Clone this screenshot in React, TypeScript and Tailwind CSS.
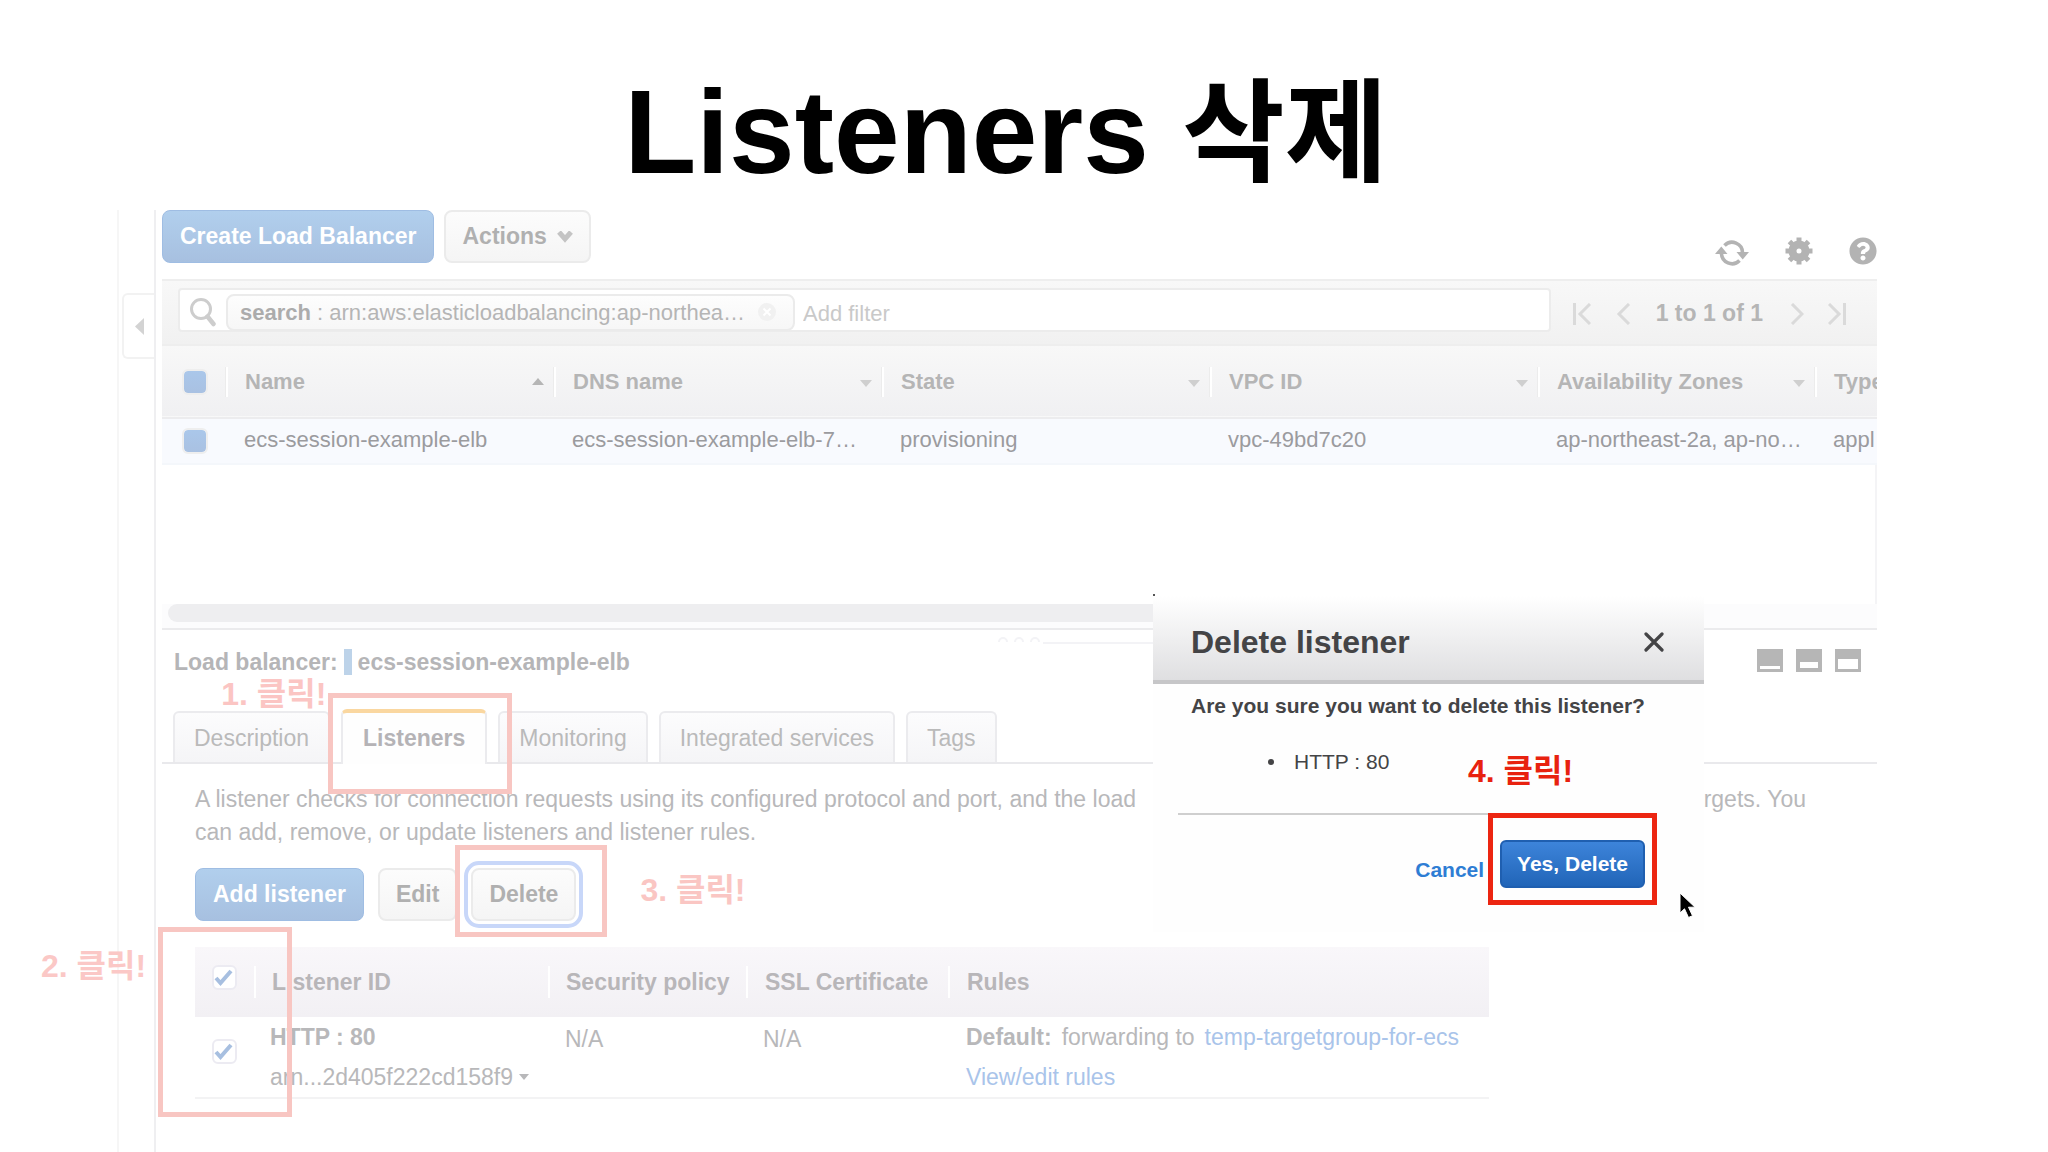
import React from 'react';
import { FaQuestionCircle } from 'react-icons/fa';

interface Column {
  label: string;
  value: string;
  width: string;
  sort?: 'asc' | 'none';
}

const COLUMNS: Column[] = [
  { label: 'Name', value: 'ecs-session-example-elb', width: 'w-[328px]', sort: 'asc' },
  { label: 'DNS name', value: 'ecs-session-example-elb-7…', width: 'w-[328px]', sort: 'none' },
  { label: 'State', value: 'provisioning', width: 'w-[328px]', sort: 'none' },
  { label: 'VPC ID', value: 'vpc-49bd7c20', width: 'w-[328px]', sort: 'none' },
  { label: 'Availability Zones', value: 'ap-northeast-2a, ap-no…', width: 'w-[277px]', sort: 'none' },
  { label: 'Type', value: 'appl', width: 'w-auto' },
];

const grayButton =
  'rounded-lg border-2 border-[#ebebeb] bg-gradient-to-b from-[#fcfcfc] to-[#f5f5f5] font-bold text-[#b0b0b0]';
const blueButton =
  'rounded-lg border border-[#9fbde3] bg-gradient-to-b from-[#b1cfed] to-[#a7c0e0] font-bold text-white';

/* Red frame drawn around the control to click */
const Frame = ({ className }: { className: string }) => (
  <span className={`pointer-events-none absolute z-20 border-[5px] ${className}`} />
);

/* Step caption next to a frame */
const Step = ({ className, children }: { className: string; children: React.ReactNode }) => (
  <span className={`pointer-events-none absolute z-20 text-[32px] leading-10 font-bold whitespace-nowrap ${className}`}>
    {children}
  </span>
);

const SortArrow = ({ up }: { up?: boolean }) => (
  <svg className={up ? 'h-[7px] w-3 text-[#b5b5b5]' : 'mt-1 h-[7px] w-3 text-[#cfcfcf]'} viewBox="0 0 12 7" fill="currentColor">
    <path d={up ? 'M0 7 6 0l6 7z' : 'M0 0h12L6 7z'} />
  </svg>
);

const RefreshIcon = () => (
  <svg className="h-7 w-[34px]" viewBox="0 0 34 28" fill="none">
    <path d="M9.500 6.500A10.500 10.500 0 0 1 27.500 14" stroke="#b3b3b3" strokeWidth="3.600" />
    <path d="M24.500 21.500A10.500 10.500 0 0 1 6.500 14" stroke="#b3b3b3" strokeWidth="3.600" />
    <path d="M21.500 13H34l-6.300 7.500zM0 15h12.500L6.300 7.500z" fill="#b3b3b3" />
  </svg>
);

const GearIcon = () => (
  <svg className="h-7 w-7" viewBox="-14 -14 28 28">
    <circle r="6.500" fill="none" stroke="#b3b3b3" strokeWidth="8" />
    {[0, 45, 90, 135].map((a) => (
      <g key={a} transform={`rotate(${a})`} fill="#b3b3b3">
        <rect x="-2.500" y="-13.500" width="5" height="5" />
        <rect x="-2.500" y="8.500" width="5" height="5" />
      </g>
    ))}
  </svg>
);

const SearchIcon = () => (
  <svg className="h-[30px] w-7" viewBox="0 0 28 30" fill="none" stroke="#cdcdcd">
    <circle cx="13" cy="12" r="9.500" strokeWidth="3" />
    <path d="m19.500 19.500 6 7.500" strokeWidth="4.500" strokeLinecap="round" />
  </svg>
);

const PageIcon = ({ d, label }: { d: string; label: string }) => (
  <button aria-label={label}>
    <svg className="h-[22px] w-[18px]" viewBox="0 0 18 22" fill="none" stroke="#dadada" strokeWidth="3">
      <path d={d} />
    </svg>
  </button>
);

const LayoutIcon = ({ label, d }: { label: string; d: string }) => (
  <button aria-label={label}>
    <svg className="h-[23px] w-[26px]" viewBox="0 0 26 23">
      <path d="M0 0h26v23H0z" fill="#b6b6b6" />
      <path d={d} fill="#fff" />
    </svg>
  </button>
);

const SelectedBox = ({ label }: { label: string }) => (
  <input
    type="checkbox"
    defaultChecked
    aria-label={label}
    className="block h-[26px] w-[26px] appearance-none rounded-md border-2 border-[#eeeeee] bg-gradient-to-b from-[#aac7ea] to-[#a9c1e2] bg-clip-padding"
  />
);

const TickBox = ({ label }: { label: string }) => (
  <span className="relative block h-[25px] w-[25px]">
    <input
      type="checkbox"
      defaultChecked
      aria-label={label}
      className="block h-[25px] w-[25px] appearance-none rounded-md border-2 border-[#ecebf2] bg-white"
    />
    <svg className="pointer-events-none absolute inset-0" viewBox="0 0 25 25" fill="none" stroke="#a7bfe0" strokeWidth="4">
      <path d="m4 13 4.500 5L19 6" />
    </svg>
  </span>
);

const Toolbar = () => (
  <div className="flex h-[69px] items-start justify-between pl-[6px]">
    <div className="flex gap-2.5 text-[23px]">
      <button className={`h-[53px] px-[17px] ${blueButton}`}>Create Load Balancer</button>
      <button className={`flex h-[53px] items-center gap-2.5 px-4 ${grayButton}`}>
        Actions
        <svg className="h-3 w-4" viewBox="0 0 16 12" fill="none" stroke="#c4c4c4" strokeWidth="5">
          <path d="m2 1 6 7 6-7" />
        </svg>
      </button>
    </div>
    <div className="flex items-start gap-9 pt-[27px]">
      <button aria-label="Refresh" className="pt-0.5">
        <RefreshIcon />
      </button>
      <button aria-label="Settings">
        <GearIcon />
      </button>
      <button aria-label="Help">
        <FaQuestionCircle className="h-7 w-7 text-[#b3b3b3]" />
      </button>
    </div>
  </div>
);

const FilterBar = () => (
  <div className="ml-[6px] flex h-[67px] border-y-2 border-[#eeeeee] bg-gradient-to-b from-[#f8f8f8] to-[#f1f1f1] pt-[7px] pl-4 text-[22px]">
    <div className="flex h-[44px] flex-1 items-center rounded border-2 border-[#ececec] bg-white pt-1 pl-[8px]">
      <SearchIcon />
      <div className="ml-2.5 flex h-[37px] w-[569px] shrink-0 items-center justify-between rounded-lg border-2 border-[#ebebeb] bg-gradient-to-b from-[#fdfdfd] to-[#f7f7f7] pr-4 pl-3 text-[#b5b5b5]">
        <span>
          <b className="text-[#acacac]">search</b> : arn:aws:elasticloadbalancing:ap-northea…
        </span>
        <button aria-label="Remove filter" className="h-5 w-5">
          <svg viewBox="0 0 20 20" fill="none">
            <circle cx="10" cy="10" r="9" fill="#f1f1f1" />
            <path d="m6.500 6.500 7 7m0-7-7 7" stroke="#fff" strokeWidth="2" />
          </svg>
        </button>
      </div>
      <input
        aria-label="Add filter"
        placeholder="Add filter"
        className="ml-2 min-w-0 flex-1 bg-transparent pt-0.5 placeholder:text-[#c9c9c9]"
      />
    </div>
    <div className="flex h-[51px] items-center pr-[31px] pl-[22px]">
      <PageIcon label="First page" d="M1.500 0v22M17 1 7 11l10 10" />
      <span className="w-6" />
      <PageIcon label="Previous page" d="M14 1 4 11l10 10" />
      <span className="px-[23px] text-[23px] font-bold text-[#b5b5b5]">1 to 1 of 1</span>
      <PageIcon label="Next page" d="m6 1 10 10L6 21" />
      <span className="w-6" />
      <PageIcon label="Last page" d="M16.500 0v22M1 1l10 10L1 21" />
    </div>
  </div>
);

const BalancerTable = () => (
  <div className="ml-[6px] flex h-[258px] flex-col overflow-hidden">
    <table className="w-full table-fixed text-left text-[22px]">
      <thead>
        <tr className="h-[72px] border-b-2 border-[#ececee] bg-gradient-to-b from-[#f8f8f8] to-[#f0f0f2]">
          <th className="w-[64px] pl-5">
            <SelectedBox label="Select all load balancers" />
          </th>
          {COLUMNS.map((c) => (
            <th key={c.label} className={`p-0 font-bold text-[#b5b5b5] ${c.width}`}>
              <div className="flex h-[30px] items-center justify-between border-l-2 border-white pr-[10px] pl-[17px] shadow-[-1px_0_0_#ececec]">
                <span className="whitespace-nowrap">{c.label}</span>
                {c.sort && <SortArrow up={c.sort === 'asc'} />}
              </div>
            </th>
          ))}
        </tr>
      </thead>
      <tbody>
        <tr className="h-[46px] border-b-2 border-[#f4f7fb] bg-[#f8fafe]">
          <td className="pl-5">
            <SelectedBox label="Select ecs-session-example-elb" />
          </td>
          {COLUMNS.map((c) => (
            <td key={c.label} className="overflow-hidden pb-1 pl-[18px] whitespace-nowrap text-[#9b9b9e]">
              {c.value}
            </td>
          ))}
        </tr>
      </tbody>
    </table>
    <div className="flex-1 border-r-2 border-[#f4f4f6]" />
  </div>
);

const Splitter = () => (
  <div className="relative ml-[6px] h-[26px] border-b-2 border-[#ebebed] bg-[#fcfcfd] pl-[6px]">
    <div className="mr-[640px] h-[18px] rounded-full bg-[#eeeef0]" />
    <svg className="absolute top-8 left-[835px] h-2 w-[160px]" viewBox="0 0 160 8" fill="none" stroke="#f3f3f6" strokeWidth="2">
      <path d="M2 6a4 4 0 0 1 8 0M18 6a4 4 0 0 1 8 0M34 6a4 4 0 0 1 8 0M46 7h114" />
    </svg>
  </div>
);

const Tab = ({ label }: { label: string }) => (
  <button className="h-[51px] rounded-t-md border-2 border-b-0 border-[#ebebee] bg-gradient-to-b from-[#fcfcfd] to-[#f5f5f7] px-[19px] pt-0.5 text-[#bababa]">
    {label}
  </button>
);

const Tabs = () => (
  <div className="ml-[6px] flex h-[54px] items-end gap-[11px] border-b-2 border-[#e9e9ec] pl-[11px] text-[23px]">
    <Tab label="Description" />
    <div className="relative -mb-[2px]">
      <button className="h-[55px] rounded-t-md border-x-2 border-t-4 border-x-[#ebebee] border-t-[#fad7a0] bg-[#fefefe] px-5 font-bold text-[#b5b3b6]">
        Listeners
      </button>
      <Frame className="-top-4 -right-[25px] -left-[13px] h-[101px] border-[#f8c6c2]" />
      <Step className="-top-[35px] right-[161px] text-[#fbc5c3]">1. 클릭!</Step>
    </div>
    <Tab label="Monitoring" />
    <Tab label="Integrated services" />
    <Tab label="Tags" />
  </div>
);

const ListenerTable = () => (
  <table className="w-[1294px] table-fixed text-left text-[23px] text-[#b8b8ba]">
    <thead>
      <tr className="h-[70px] bg-gradient-to-b from-[#f9f7fa] to-[#f2f0f4] text-[#b8b6b9]">
        <th className="w-[59px] pb-2.5 pl-[17px]">
          <TickBox label="Select all listeners" />
        </th>
        <th className="w-[294px] p-0">
          <div className="h-8 border-l-2 border-white pl-4 leading-8">Listener ID</div>
        </th>
        <th className="w-[198px] p-0">
          <div className="h-8 border-l-2 border-white pl-4 leading-8 whitespace-nowrap">Security policy</div>
        </th>
        <th className="w-[202px] p-0">
          <div className="h-8 border-l-2 border-white pl-[17px] leading-8 whitespace-nowrap">SSL Certificate</div>
        </th>
        <th className="p-0">
          <div className="h-8 border-l-2 border-white pl-[17px] leading-8">Rules</div>
        </th>
      </tr>
    </thead>
    <tbody>
      <tr className="h-[80px] border-b-2 border-[#f3f3f4] align-top leading-10">
        <td className="pt-[22px] pl-[17px]">
          <TickBox label="Select HTTP : 80" />
        </td>
        <td className="pl-4">
          <b className="block">HTTP : 80</b>
          <button className="flex items-center gap-1.5">
            arn...2d405f222cd158f9
            <svg className="h-1.5 w-2.5" viewBox="0 0 10 6" fill="#b8b8ba">
              <path d="M0 0h10L5 6z" />
            </svg>
          </button>
        </td>
        <td className="pt-0.5 pl-[17px]">N/A</td>
        <td className="pt-0.5 pl-[17px]">N/A</td>
        <td className="pl-[18px] whitespace-nowrap">
          <div className="flex gap-2.5">
            <b>Default:</b>
            <span>forwarding to</span>
            <a href="#targetgroup" className="text-[#a9c4ea]">
              temp-targetgroup-for-ecs
            </a>
          </div>
          <a href="#rules" className="block text-[#a9c4ea]">
            View/edit rules
          </a>
        </td>
      </tr>
    </tbody>
  </table>
);

const Details = () => (
  <section>
    <div className="flex h-[80px] items-start justify-between pt-[15px] pr-4 pl-[18px]">
      <h2 className="flex items-center gap-[6px] text-[23px] leading-[34px] font-bold text-[#b5b5b7]">
        Load balancer:
        <span className="h-[26px] w-2 bg-[#bdd3e9]" />
        ecs-session-example-elb
      </h2>
      <div className="flex gap-[13px] pt-1">
        <LayoutIcon label="Minimize panel" d="M3 17h20v3H3z" />
        <LayoutIcon label="Split panel" d="M4 13h18v6H4z" />
        <LayoutIcon label="Maximize panel" d="M3 10h20v10H3z" />
      </div>
    </div>
    <Tabs />
    <div className="pt-[19px] pr-[50px] pl-[39px]">
      <p className="text-[23px] leading-[33px] text-[#b8b8ba]">
        A listener checks for connection requests using its configured protocol and port, and the load&nbsp;&nbsp;
        balancer uses the listener rules to route requests to targets. You can add, remove, or update listeners and
        listener rules.
      </p>
      <div className="mt-[19px] flex gap-3.5 text-[23px]">
        <button className={`h-[53px] px-[17px] ${blueButton}`}>Add listener</button>
        <button className={`h-[53px] px-4 ${grayButton}`}>Edit</button>
        <div className="relative">
          <button className={`h-[53px] px-4 outline-4 outline-offset-3 outline-[#c8d7f9] ${grayButton}`}>Delete</button>
          <Frame className="-top-[23px] -right-[31px] -left-4 h-[92px] border-[#f8c6c2]" />
          <Step className="top-[2px] left-[169px] text-[#fac6c3]">3. 클릭!</Step>
        </div>
      </div>
      <div className="relative mt-[26px]">
        <ListenerTable />
        <Frame className="-top-5 -left-[37px] h-[190px] w-[134px] border-[#f8c6c2]" />
        <Step className="-top-px -left-[154px] text-[#fbc8c6]">2. 클릭!</Step>
      </div>
    </div>
  </section>
);

const DeleteDialog = () => (
  <div
    role="dialog"
    aria-labelledby="dialog-title"
    className="absolute top-[596px] right-[344px] z-30 h-[336px] w-[551px] bg-[#fefefe] text-[21px] text-[#444446]"
  >
    <span className="absolute -top-0.5 left-0 h-0.5 w-0.5 bg-[#555]" />
    <div className="flex h-[88px] items-center justify-between border-b-4 border-[#c6c6c8] bg-gradient-to-b from-white to-[#dfdfe1] pt-[8px] pr-10 pl-[38px]">
      <h2 id="dialog-title" className="text-[32px] font-bold">
        Delete listener
      </h2>
      <button aria-label="Close">
        <svg className="h-5 w-5" viewBox="0 0 20 20" fill="none" stroke="#444446" strokeWidth="3.200" strokeLinecap="round">
          <path d="m2 2 16 16M18 2 2 18" />
        </svg>
      </button>
    </div>
    <p className="pt-2 pl-[38px] leading-7 font-bold">Are you sure you want to delete this listener?</p>
    <ul className="relative pt-7 pl-[115px] leading-7">
      <li className="flex items-center gap-5">
        <span className="h-1.5 w-1.5 rounded-full bg-[#444446]" />
        HTTP : 80
      </li>
      <Step className="top-[31px] left-[315px] text-[#e8220f]">4. 클릭!</Step>
    </ul>
    <div className="mt-[37px] mr-[47px] ml-[25px] flex items-start justify-end gap-4 border-t-2 border-[#cfcfcf] pt-[25px] pr-3 font-bold">
      <button className="pt-3 leading-9 text-[#2e7dd4]">Cancel</button>
      <div className="relative">
        <button className="h-12 rounded-md border-2 border-[#1f5fb0] bg-gradient-to-b from-[#3d84da] to-[#2165b8] px-[15px] text-white">
          Yes, Delete
        </button>
        <Frame className="-top-[27px] -right-3 -left-3 h-[92px] border-[#ec2511]" />
      </div>
    </div>
    <svg className="absolute top-[296px] left-[526px] h-[27px] w-[19px]" viewBox="0 0 19 27">
      <path d="M1 1v20l4.500-4.200 4 8.700 4-1.800-4-8.500H16z" fill="#000" stroke="#fff" strokeWidth="1" />
    </svg>
  </div>
);

export default function App() {
  return (
    <main
      className="relative flex min-h-screen flex-col overflow-hidden bg-white pr-[171px] pl-[117px]"
      style={{ fontFamily: '"Liberation Sans", "Noto Sans CJK KR", sans-serif' }}
    >
      <h1 className="h-[210px] pt-[72px] pr-[18px] pl-[36px] text-center text-[118px] leading-[120px] font-bold text-black">
        Listeners <span className="text-[112px]">삭제</span>
      </h1>
      <div className="flex flex-1">
        {/* Collapsed side navigation */}
        <aside className="w-[38px] shrink-0 border-l-2 border-[#f6f6f6] pt-[83px] pl-[3px]">
          <button
            aria-label="Open navigation"
            className="flex h-[66px] w-full items-center justify-center rounded-l-md border-2 border-r-0 border-[#f2f2f2]"
          >
            <svg className="h-[17px] w-[9px]" viewBox="0 0 9 17" fill="#d3d3d3">
              <path d="M9 0v17L0 8.500z" />
            </svg>
          </button>
        </aside>
        <div className="-ml-px min-w-0 flex-1 border-l-2 border-[#efeff1]">
          <Toolbar />
          <FilterBar />
          <BalancerTable />
          <Splitter />
          <Details />
        </div>
      </div>
      <DeleteDialog />
    </main>
  );
}
